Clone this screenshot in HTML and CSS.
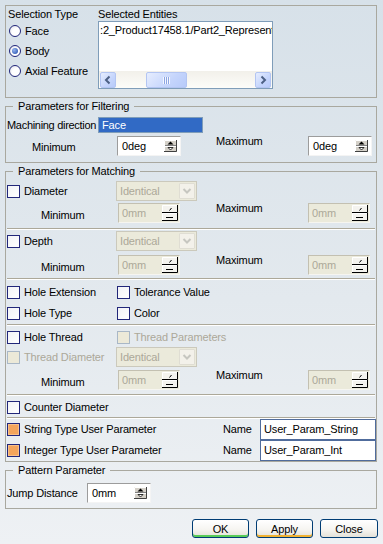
FILE: index.html
```html
<!DOCTYPE html>
<html lang="en">
<head>
<meta charset="utf-8">
<title>Hole Recognition</title>
<link rel="stylesheet" href="styles.css">
</head>
<body>
<div class="dialog">
  <div class="frame sel">
    <div class="seltype">
      <div class="title">Selection Type</div>
      <div class="radio-row"><span class="radio"></span><span>Face</span></div>
      <div class="radio-row"><span class="radio on"></span><span>Body</span></div>
      <div class="radio-row"><span class="radio"></span><span>Axial Feature</span></div>
    </div>
    <div class="entities">
      <div class="title">Selected Entities</div>
      <div class="listbox">
        <div class="list-text">:2_Product17458.1/Part2_Representation</div>
        <div class="hscroll">
          <span class="sb-btn"><svg width="14" height="14" viewBox="0 0 14 14"><polyline points="8.5,3.5 5,7 8.5,10.5" fill="none" stroke="#4d6185" stroke-width="2"/></svg></span>
          <span class="sb-track"><span class="sb-thumb"><svg width="8" height="7" viewBox="0 0 8 7"><path d="M0.5 0V7M2.5 0V7M4.5 0V7M6.5 0V7" stroke="#f4f7ff"/><path d="M1.5 0V7M3.5 0V7M5.5 0V7" stroke="#8da5e2"/></svg></span></span>
          <span class="sb-btn"><svg width="14" height="14" viewBox="0 0 14 14"><polyline points="5.5,3.5 9,7 5.5,10.5" fill="none" stroke="#4d6185" stroke-width="2"/></svg></span>
        </div>
      </div>
    </div>
  </div>

  <fieldset class="group">
    <legend>Parameters for Filtering</legend>
    <div class="mdir"><span class="mdir-lbl">Machining direction</span><span class="face-field">Face</span></div>
    <div class="prow f-range">
      <span class="minlbl">Minimum</span>
      <div class="spin at1"><span>0deg</span><svg width="13" height="12" viewBox="0 0 13 12"><rect width="13" height="12" fill="#d4d0c8"/><path d="M0.5 11.5V0.5H12.5" stroke="#fff" fill="none"/><path d="M0 11.5H12.5V0" stroke="#404040" fill="none"/><path d="M1 5.5H12" stroke="#808080"/><path d="M1 6.5H12" stroke="#fff"/><polygon points="3.5,4.5 9.5,4.5 6.5,1.5" fill="#000"/><polygon points="4,7.5 9,7.5 6.5,10" fill="#fff" stroke="#000" stroke-width="0.8"/></svg></div>
      <span class="maxlbl">Maximum</span>
      <div class="spin"><span>0deg</span><svg width="13" height="12" viewBox="0 0 13 12"><rect width="13" height="12" fill="#d4d0c8"/><path d="M0.5 11.5V0.5H12.5" stroke="#fff" fill="none"/><path d="M0 11.5H12.5V0" stroke="#404040" fill="none"/><path d="M1 5.5H12" stroke="#808080"/><path d="M1 6.5H12" stroke="#fff"/><polygon points="3.5,4.5 9.5,4.5 6.5,1.5" fill="#000"/><polygon points="4,7.5 9,7.5 6.5,10" fill="#fff" stroke="#000" stroke-width="0.8"/></svg></div>
    </div>
  </fieldset>

  <fieldset class="group matching">
    <legend>Parameters for Matching</legend>
    <div class="blk-diam">
      <div class="prow">
        <div class="chk-row"><span class="cb"></span><span>Diameter</span></div>
        <div class="combo"><span>Identical</span><span class="combo-btn"><svg width="10" height="6" viewBox="0 0 10 6"><polyline points="1.5,1 5,4.5 8.5,1" fill="none" stroke="#c6c6c0" stroke-width="2"/></svg></span></div>
      </div>
      <div class="prow m-range">
        <span class="minlbl">Minimum</span>
        <div class="spin dis at2"><span>0mm</span><svg width="16" height="16" viewBox="0 0 16 16"><rect width="16" height="16" fill="#f4f3ee"/><path d="M0.5 7V0.5H15" stroke="#fff" fill="none"/><path d="M0 7.5H15.5V0" stroke="#000" fill="none"/><path d="M0.5 15V8.5H15" stroke="#fff" fill="none"/><path d="M0 15.5H15.5V8" stroke="#000" fill="none"/><path d="M7.5 5.5L9.5 3" stroke="#000"/><path d="M4 12.5H11" stroke="#000"/></svg></div>
        <span class="maxlbl">Maximum</span>
        <div class="spin dis"><span>0mm</span><svg width="16" height="16" viewBox="0 0 16 16"><rect width="16" height="16" fill="#f4f3ee"/><path d="M0.5 7V0.5H15" stroke="#fff" fill="none"/><path d="M0 7.5H15.5V0" stroke="#000" fill="none"/><path d="M0.5 15V8.5H15" stroke="#fff" fill="none"/><path d="M0 15.5H15.5V8" stroke="#000" fill="none"/><path d="M7.5 5.5L9.5 3" stroke="#000"/><path d="M4 12.5H11" stroke="#000"/></svg></div>
      </div>
    </div>
    <div class="sep"></div>
    <div class="blk-depth">
      <div class="prow">
        <div class="chk-row"><span class="cb"></span><span>Depth</span></div>
        <div class="combo"><span>Identical</span><span class="combo-btn"><svg width="10" height="6" viewBox="0 0 10 6"><polyline points="1.5,1 5,4.5 8.5,1" fill="none" stroke="#c6c6c0" stroke-width="2"/></svg></span></div>
      </div>
      <div class="prow m-range">
        <span class="minlbl">Minimum</span>
        <div class="spin dis at2"><span>0mm</span><svg width="16" height="16" viewBox="0 0 16 16"><rect width="16" height="16" fill="#f4f3ee"/><path d="M0.5 7V0.5H15" stroke="#fff" fill="none"/><path d="M0 7.5H15.5V0" stroke="#000" fill="none"/><path d="M0.5 15V8.5H15" stroke="#fff" fill="none"/><path d="M0 15.5H15.5V8" stroke="#000" fill="none"/><path d="M7.5 5.5L9.5 3" stroke="#000"/><path d="M4 12.5H11" stroke="#000"/></svg></div>
        <span class="maxlbl">Maximum</span>
        <div class="spin dis"><span>0mm</span><svg width="16" height="16" viewBox="0 0 16 16"><rect width="16" height="16" fill="#f4f3ee"/><path d="M0.5 7V0.5H15" stroke="#fff" fill="none"/><path d="M0 7.5H15.5V0" stroke="#000" fill="none"/><path d="M0.5 15V8.5H15" stroke="#fff" fill="none"/><path d="M0 15.5H15.5V8" stroke="#000" fill="none"/><path d="M7.5 5.5L9.5 3" stroke="#000"/><path d="M4 12.5H11" stroke="#000"/></svg></div>
      </div>
    </div>
    <div class="sep"></div>
    <div class="blk-checks">
      <div class="chk-row"><span class="cb"></span><span>Hole Extension</span></div>
      <div class="chk-row"><span class="cb"></span><span>Tolerance Value</span></div>
      <div class="chk-row"><span class="cb"></span><span>Hole Type</span></div>
      <div class="chk-row"><span class="cb"></span><span>Color</span></div>
    </div>
    <div class="sep"></div>
    <div class="blk-thread">
      <div class="prow">
        <div class="chk-row"><span class="cb"></span><span>Hole Thread</span></div>
        <div class="chk-row off"><span class="cb"></span><span class="nowrap">Thread Parameters</span></div>
      </div>
      <div class="prow">
        <div class="chk-row off"><span class="cb"></span><span>Thread Diameter</span></div>
        <div class="combo"><span>Identical</span><span class="combo-btn"><svg width="10" height="6" viewBox="0 0 10 6"><polyline points="1.5,1 5,4.5 8.5,1" fill="none" stroke="#c6c6c0" stroke-width="2"/></svg></span></div>
      </div>
      <div class="prow m-range r3">
        <span class="minlbl">Minimum</span>
        <div class="spin dis at2"><span>0mm</span><svg width="16" height="16" viewBox="0 0 16 16"><rect width="16" height="16" fill="#f4f3ee"/><path d="M0.5 7V0.5H15" stroke="#fff" fill="none"/><path d="M0 7.5H15.5V0" stroke="#000" fill="none"/><path d="M0.5 15V8.5H15" stroke="#fff" fill="none"/><path d="M0 15.5H15.5V8" stroke="#000" fill="none"/><path d="M7.5 5.5L9.5 3" stroke="#000"/><path d="M4 12.5H11" stroke="#000"/></svg></div>
        <span class="maxlbl">Maximum</span>
        <div class="spin dis"><span>0mm</span><svg width="16" height="16" viewBox="0 0 16 16"><rect width="16" height="16" fill="#f4f3ee"/><path d="M0.5 7V0.5H15" stroke="#fff" fill="none"/><path d="M0 7.5H15.5V0" stroke="#000" fill="none"/><path d="M0.5 15V8.5H15" stroke="#fff" fill="none"/><path d="M0 15.5H15.5V8" stroke="#000" fill="none"/><path d="M7.5 5.5L9.5 3" stroke="#000"/><path d="M4 12.5H11" stroke="#000"/></svg></div>
      </div>
    </div>
    <div class="sep"></div>
    <div class="blk-counter">
      <div class="chk-row"><span class="cb"></span><span>Counter Diameter</span></div>
    </div>
    <div class="sep"></div>
    <div class="blk-user">
      <div class="chk-row"><span class="cb orange"></span><span>String Type User Parameter</span></div>
      <span>Name</span>
      <div class="uinput">User_Param_String</div>
      <div class="chk-row"><span class="cb orange"></span><span>Integer Type User Parameter</span></div>
      <span>Name</span>
      <div class="uinput">User_Param_Int</div>
    </div>
  </fieldset>

  <fieldset class="group">
    <legend>Pattern Parameter</legend>
    <div class="jrow">
      <span class="jlbl">Jump Distance</span>
      <div class="spin"><span>0mm</span><svg width="13" height="12" viewBox="0 0 13 12"><rect width="13" height="12" fill="#d4d0c8"/><path d="M0.5 11.5V0.5H12.5" stroke="#fff" fill="none"/><path d="M0 11.5H12.5V0" stroke="#404040" fill="none"/><path d="M1 5.5H12" stroke="#808080"/><path d="M1 6.5H12" stroke="#fff"/><polygon points="3.5,4.5 9.5,4.5 6.5,1.5" fill="#000"/><polygon points="4,7.5 9,7.5 6.5,10" fill="#fff" stroke="#000" stroke-width="0.8"/></svg></div>
    </div>
  </fieldset>

  <div class="btns">
    <button class="btn ok">OK</button>
    <button class="btn apply">Apply</button>
    <button class="btn close">Close</button>
  </div>
</div>
</body>
</html>
```

FILE: styles.css
```css
* { box-sizing: border-box; }
html, body { margin: 0; padding: 0; }
body {
  width: 383px;
  height: 544px;
  overflow: hidden;
  background: linear-gradient(180deg, #d7e1e9 0%, #e3e9ee 55%, #eef1f4 100%);
  font-family: "Liberation Sans", Arial, sans-serif;
  font-size: 11px;
  line-height: 13px;
  letter-spacing: -0.15px;
  color: #000;
}
.dialog { padding: 5px 6px 0 5px; }
.frame { border: 1px solid #a9a89f; }
.nowrap, .title { white-space: nowrap; }

/* selection frame */
.sel { display: flex; height: 93px; }
.seltype { width: 92px; padding: 2px 0 0 2px; }
.title { height: 13px; }
.radio-row { display: flex; align-items: center; gap: 4px; height: 20px; padding-left: 1px; white-space: nowrap; }
.radio {
  flex: none; width: 12px; height: 12px; border-radius: 50%;
  border: 1px solid #22277a;
  background: radial-gradient(circle at 65% 65%, #ffffff 0, #ffffff 45%, #dcdce6 100%);
  display: flex; align-items: center; justify-content: center;
}
.radio.on::after {
  content: ""; width: 6px; height: 6px; border-radius: 50%;
  background: radial-gradient(circle at 35% 35%, #94b4ef 0, #3a63ba 75%);
}
.entities { padding-top: 2px; }
.listbox {
  width: 175px; height: 68px; border: 1px solid #7f9db9; background: #fff;
  display: flex; flex-direction: column; justify-content: space-between;
}
.list-text { padding: 2px 0 0 1px; white-space: nowrap; overflow: hidden; }
.hscroll { height: 17px; display: flex; padding: 1px 1px 0 1px; background: linear-gradient(#f2f0ea, #fcfcf9); }
.sb-btn, .sb-thumb {
  flex: none; height: 16px; border: 1px solid #b3c5f2; border-radius: 2px;
  background: linear-gradient(135deg, #e6edfe 0%, #c5d5fc 60%, #b7cafa 100%);
  display: flex; align-items: center; justify-content: center;
}
.sb-btn { width: 16px; }
.sb-track { flex: 1; display: flex; }
.sb-thumb { width: 41px; margin-left: 30px; }

/* group boxes */
.group { margin: 2px 0 0; padding: 0; border: 1px solid #a9a89f; min-width: 0; }
.group legend { margin-left: 7px; padding: 0 5px; line-height: 13px; }

.mdir { display: flex; align-items: center; height: 16px; margin-top: 4px; padding-left: 1px; }
.mdir-lbl { width: 91px; white-space: nowrap; letter-spacing: -0.3px; }
.face-field {
  width: 105px; height: 16px; background: #316ac5; border: 1px solid #7f9db9;
  color: #fff; padding-left: 3px; line-height: 14px;
}

.prow { display: grid; grid-template-columns: 110px 100px 92px 68px; height: 20px; align-items: center; }
.f-range { margin: 3px 0 6px; }
.minlbl { white-space: nowrap; padding-top: 2px; }
.f-range .minlbl { padding-left: 26px; }
.m-range .minlbl { padding-left: 35px; padding-top: 4px; }
.maxlbl { align-self: start; margin-top: -1px; white-space: nowrap; }

.spin {
  width: 64px; height: 20px; display: flex; align-items: center; justify-content: space-between;
  background: #fff; border: 1px solid; border-color: #9c9c9c #f4f4f4 #f4f4f4 #9c9c9c;
  padding: 0 3px 0 4px;
}
.spin svg { flex: none; }
.spin.at1 { margin-left: 1px; }
.spin.at2 { margin-left: 2px; }
.spin.dis {
  width: 62px; background: #ebeadb; color: #aca899;
  border-color: #c3c0b1 #f6f5f0 #f6f5f0 #c3c0b1; padding: 0 1px 0 3px;
}

.combo {
  width: 81px; height: 20px; display: flex; align-items: center;
  border: 1px solid #cbc9bc; background: #ebeadb; color: #aca899; padding-left: 3px;
}
.combo-btn {
  margin-left: auto; margin-right: 1px; width: 16px; height: 16px;
  background: #f3f1ea; border: 1px solid #dfddd3; border-radius: 1px;
  display: flex; align-items: center; justify-content: center;
}

.chk-row { display: flex; align-items: center; gap: 4px; padding-left: 1px; white-space: nowrap; }
.cb { flex: none; width: 13px; height: 13px; border: 1px solid #22277a; background: linear-gradient(135deg, #f2f3f6, #ffffff); }
.cb.orange { background: #f4a55c; box-shadow: inset 0 0 0 1px #f8c08a; }
.chk-row.off { color: #aca899; }
.chk-row.off .cb { border-color: #a9b7c6; background: #ece9d8; }

.sep { height: 2px; margin: 0 1px; border-top: 1px solid #aca899; border-bottom: 1px solid #fff; }

.blk-diam { padding: 3px 0 5px; }
.blk-diam .prow + .prow { margin-top: 2px; }
.blk-depth { padding: 1px 0 3px; }
.blk-depth .prow + .prow { margin-top: 4px; }
.blk-checks { padding-top: 2px; display: grid; grid-template-columns: 110px 1fr; grid-auto-rows: 21px; align-items: center; }
.blk-thread { padding: 1px 0 4px; }
.blk-thread .r3 { margin-top: 3px; }
.blk-counter { padding-top: 1px; height: 21px; display: flex; align-items: center; }
.blk-counter .chk-row { height: 20px; }
.blk-user { display: grid; grid-template-columns: 217px 37px 116px; grid-auto-rows: 21px; align-items: center; }
.uinput { height: 21px; border: 1px solid #506c9c; background: #fff; padding-left: 3px; display: flex; align-items: center; }

.jrow { display: flex; align-items: center; height: 20px; margin: 6px 0 5px; padding-left: 1px; }
.jlbl { width: 80px; white-space: nowrap; }

/* buttons */
.btns { display: flex; justify-content: flex-end; gap: 7px; margin: 10px -1px 0 0; }
.btn {
  width: 57px; height: 19px; padding: 0; border: 1px solid #003c74; border-radius: 3px;
  background: linear-gradient(180deg, #ffffff 0%, #f6f5f1 55%, #e4e1d8 100%);
  font-family: inherit; font-size: 11px; letter-spacing: -0.15px; line-height: 16px; color: #000;
  text-align: center;
}
.btn.ok { box-shadow: inset 0 -2px 0 #58cc58; }
.btn.apply { box-shadow: inset 0 -2px 0 #f0b232; }
.btn.close { width: 58px; }
```
